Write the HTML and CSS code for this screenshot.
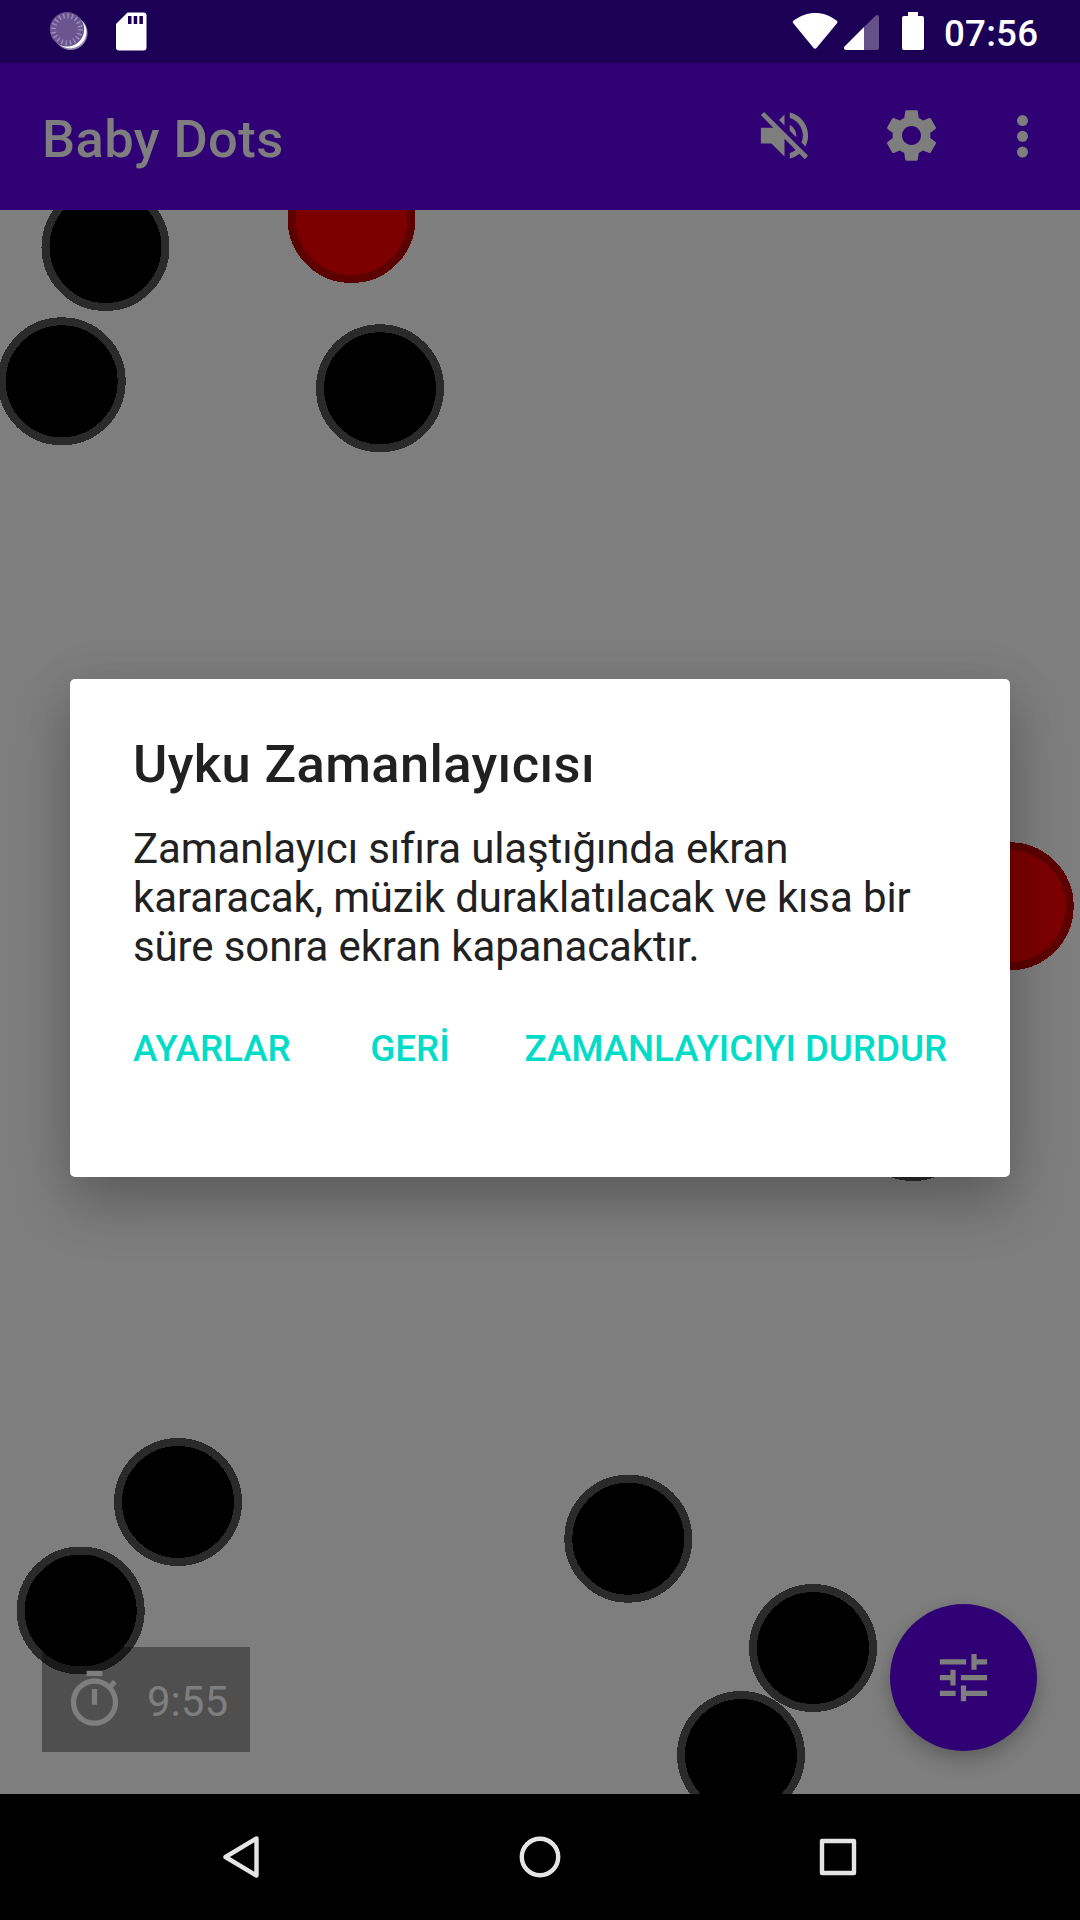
FILE: index.html
```html
<!DOCTYPE html>
<html lang="tr">
<head>
<meta charset="utf-8">
<title>Baby Dots</title>
<link rel="stylesheet" href="styles.css">
</head>
<body>
<div class="screen">
  <header class="status-bar">
    <svg class="status-left" width="120" height="63" viewBox="0 0 120 63">
      <circle cx="33.6" cy="33" r="17" fill="#8d80aa"/>
      <circle cx="33" cy="32" r="16.4" fill="#fff"/>
      <circle cx="30" cy="29.3" r="17.2" fill="#6a5591"/>
      <circle cx="30" cy="29.3" r="13.4" fill="none" stroke="#9f91bb" stroke-width="5" stroke-dasharray="1.3 2.909"/>
      <path d="M90.500 12.500h16a3 3 0 0 1 3 3v32a3 3 0 0 1-3 3H82a3 3 0 0 1-3-3V24z" fill="#fff"/>
      <path d="M91 16h3.500v8H91zM96.700 16h3.500v8h-3.500zM102.400 16h3.500v8h-3.500z" fill="#1b0055"/>
    </svg>
    <div class="status-right">
      <svg width="140" height="63" viewBox="0 0 140 63">
        <path d="M2.300 23.300Q.900 21.900 2.400 20.800C16 10.400 33 10.400 45.800 20.800Q47.300 21.900 46 23.300L25.500 48Q24 49.600 22.600 48z" fill="#fff"/>
        <path d="M73 27 84.500 15.700Q88 13.800 88 17v31a2 2 0 0 1-2 2H73z" fill="#655189"/>
        <path d="M73 27v23H55Q52.200 49.500 53.300 46.800z" fill="#fff"/>
        <path d="M117 12h10v4h4a2 2 0 0 1 2 2v30a2 2 0 0 1-2 2h-18a2 2 0 0 1-2-2V18a2 2 0 0 1 2-2h4z" fill="#fff"/>
      </svg>
      <span class="clock">07:56</span>
    </div>
  </header>

  <div class="app-bar">
    <h1 class="app-title">Baby Dots</h1>
    <div class="actions">
      <svg class="icon" viewBox="0 0 24 24"><path d="M16.500 12c0-1.770-1.020-3.290-2.500-4.030v2.210l2.450 2.450c.03-.2.05-.41.05-.63zm2.500 0c0 .94-.2 1.820-.54 2.640l1.510 1.510C20.630 14.910 21 13.500 21 12c0-4.280-2.990-7.860-7-8.770v2.060c2.890.86 5 3.540 5 6.710zM4.270 3 3 4.270 7.730 9H3v6h4l5 5v-6.730l4.250 4.250c-.67.52-1.420.93-2.250 1.180v2.060c1.380-.31 2.630-.95 3.690-1.810L19.730 21 21 19.730l-9-9L4.270 3zM12 4 9.910 6.090 12 8.180V4z"/></svg>
      <svg class="icon" viewBox="0 0 24 24"><path d="M19.140,12.940c0.040-0.300,0.060-0.610,0.060-0.940c0-0.320-0.020-0.640-0.070-0.940l2.030-1.580c0.180-0.140,0.230-0.410,0.120-0.610l-1.920-3.320c-0.120-0.220-0.370-0.290-0.590-0.220l-2.390,0.960c-0.500-0.380-1.030-0.700-1.620-0.940L14.400,2.810c-0.040-0.240-0.240-0.410-0.480-0.410h-3.840c-0.240,0-0.430,0.170-0.470,0.410L9.250,5.350C8.660,5.590,8.120,5.920,7.630,6.290L5.240,5.330c-0.220-0.080-0.470,0-0.590,0.220L2.740,8.870C2.620,9.080,2.660,9.340,2.860,9.480l2.030,1.580C4.840,11.360,4.800,11.690,4.800,12s0.020,0.640,0.070,0.940l-2.030,1.580c-0.180,0.140-0.230,0.410-0.120,0.610l1.920,3.320c0.120,0.220,0.370,0.290,0.590,0.220l2.390-0.960c0.500,0.380,1.030,0.700,1.620,0.940l0.360,2.540c0.050,0.240,0.240,0.410,0.480,0.410h3.840c0.240,0,0.440-0.170,0.470-0.410l0.360-2.540c0.590-0.240,1.130-0.560,1.620-0.940l2.390,0.960c0.220,0.080,0.470,0,0.590-0.220l1.920-3.320c0.120-0.220,0.070-0.470-0.120-0.610L19.140,12.940zM12,15.600c-1.980,0-3.600-1.620-3.600-3.600s1.620-3.600,3.600-3.600s3.600,1.620,3.600,3.600S13.980,15.600,12,15.600z"/></svg>
      <svg class="icon icon-more" viewBox="0 0 24 24"><circle cx="12" cy="6.300" r="2.100"/><circle cx="12" cy="12.300" r="2.100"/><circle cx="12" cy="18.300" r="2.100"/></svg>
    </div>
  </div>

  <main class="stage">
    <svg class="dots" width="1080" height="1584" viewBox="0 210 1080 1584" shape-rendering="crispEdges">
      <g class="dot-black">
        <circle cx="105.500" cy="247" r="60"/>
        <circle cx="61.700" cy="381.300" r="60"/>
        <circle cx="380" cy="388.300" r="60"/>
        <circle cx="913" cy="1117" r="60"/>
        <circle cx="178" cy="1502" r="60"/>
        <circle cx="80.700" cy="1610.500" r="60"/>
        <circle cx="628.300" cy="1538.700" r="60"/>
        <circle cx="813" cy="1648" r="60"/>
        <circle cx="741" cy="1755" r="60"/>
      </g>
      <g class="dot-red">
        <circle cx="351.500" cy="219" r="60"/>
        <circle cx="1009.700" cy="906.300" r="60"/>
      </g>
    </svg>
    <div class="timer">
      <svg class="icon" viewBox="0 0 24 24"><path d="M15 1H9v2h6V1zm-4 13h2V8h-2v6zm8.030-6.610 1.420-1.420c-.43-.51-.9-.99-1.410-1.410l-1.420 1.420C16.070 4.740 14.120 4 12 4c-4.970 0-9 4.030-9 9s4.020 9 9 9 9-4.030 9-9c0-2.120-.74-4.070-1.970-5.610zM12 20c-3.870 0-7-3.130-7-7s3.130-7 7-7 7 3.130 7 7-3.130 7-7 7z"/></svg>
      <span class="timer-value">9:55</span>
    </div>
    <div class="fab">
      <svg class="icon" viewBox="0 0 24 24"><path d="M3 17v2h6v-2H3zM3 5v2h10V5H3zm10 16v-2h8v-2h-8v-2h-2v6h2zM7 9v2H3v2h4v2h2V9H7zm14 4v-2H11v2h10zm-6-4h2V7h4V5h-4V3h-2v6z"/></svg>
    </div>
  </main>

  <nav class="nav-bar">
    <svg width="44" height="44" viewBox="0 0 44 44"><path d="M37.500 3.500v37L6.500 22z"/></svg>
    <svg width="44" height="44" viewBox="0 0 44 44"><circle cx="22" cy="22" r="18.200"/></svg>
    <svg width="44" height="44" viewBox="0 0 44 44"><rect x="6" y="6" width="32" height="32"/></svg>
  </nav>

  <section class="dialog">
    <h2 class="dialog-title">Uyku Zamanlayıcısı</h2>
    <p class="dialog-text">Zamanlayıcı sıfıra ulaştığında ekran kararacak, müzik duraklatılacak ve kısa bir süre sonra ekran kapanacaktır.</p>
    <div class="dialog-actions">
      <span class="settings">AYARLAR</span>
      <span class="back">GERİ</span>
      <span>ZAMANLAYICIYI DURDUR</span>
    </div>
  </section>
</div>
</body>
</html>
```
FILE: styles.css
```css
* { box-sizing: border-box; margin: 0; padding: 0; }

body { background: #000; font-family: Roboto, sans-serif; }

svg { display: block; flex: none; }

.screen {
  position: relative;
  display: flex;
  flex-direction: column;
  width: 1080px;
  height: 1920px;
  overflow: hidden;
}

.status-bar {
  display: flex;
  justify-content: space-between;
  height: 63px;
  padding: 0 42px 0 37px;
  background: #1b0055;
}

.status-right { display: flex; gap: 13px; width: 247px; }

.clock {
  color: #fff;
  font-size: 36.75px;
  font-weight: 500;
  letter-spacing: .2px;
  line-height: 67px;
  white-space: nowrap;
}

.app-bar {
  display: flex;
  justify-content: space-between;
  height: 147px;
  padding: 0 26px 0 42px;
  background: #300075;
}

.app-title {
  color: #7e7e7e;
  font-size: 52.5px;
  font-weight: 500;
  letter-spacing: .4px;
  line-height: 152px;
}

.icon { width: 63px; height: 63px; fill: #7e7e7e; }

.actions { display: flex; align-items: center; gap: 64px; padding-bottom: 2px; }
.icon-more { margin-left: -16px; }

.stage {
  position: relative;
  height: 1584px;
  overflow: hidden;
  background: #7e7e7e;
}

.dot-black circle, .dot-red circle { stroke-width: 8px; }
.dot-black { fill: #000; stroke: #2a2a2a; }
.dot-red { fill: #7c0000; stroke: #5d0000; }

.timer {
  position: absolute;
  left: 42px;
  bottom: 42px;
  display: flex;
  align-items: center;
  gap: 21px;
  width: 208px;
  height: 105px;
  padding-left: 21px;
  background: rgba(0, 0, 0, .37);
  color: #7e7e7e;
  font-size: 42px;
}

.timer-value { padding-top: 3px; }

.fab {
  position: absolute;
  right: 43px;
  bottom: 43px;
  display: flex;
  align-items: center;
  justify-content: center;
  width: 147px;
  height: 147px;
  border-radius: 50%;
  background: #300075;
  box-shadow: 0 10px 20px rgba(0, 0, 0, .2), 0 3px 12px rgba(0, 0, 0, .08);
}

.nav-bar {
  display: flex;
  justify-content: space-between;
  align-items: center;
  height: 126px;
  padding: 0 220px 0 219px;
  background: #000;
}

.nav-bar svg { fill: none; stroke: #e5e5e5; stroke-width: 4.4px; stroke-linejoin: round; }

.dialog {
  position: absolute;
  left: 70px;
  top: 679px;
  width: 940px;
  height: 498px;
  padding: 53px 63px 0;
  border-radius: 5px;
  background: #fff;
  box-shadow: 0 28px 56px rgba(0, 0, 0, .24), 0 0 50px rgba(0, 0, 0, .08);
}

.dialog-title {
  color: #212121;
  font-size: 52.5px;
  font-weight: 500;
  letter-spacing: .36px;
  line-height: 64px;
}

.dialog-text {
  margin-top: 28px;
  color: #212121;
  font-size: 42px;
  letter-spacing: -.12px;
  line-height: 49px;
}

.dialog-actions {
  display: flex;
  justify-content: flex-end;
  margin-top: 53px;
  color: #00dcc8;
  font-size: 36.75px;
  font-weight: 500;
  letter-spacing: -.04px;
  line-height: 50px;
  white-space: nowrap;
}

.settings { margin-right: auto; }
.back { margin-right: 75px; }
```
